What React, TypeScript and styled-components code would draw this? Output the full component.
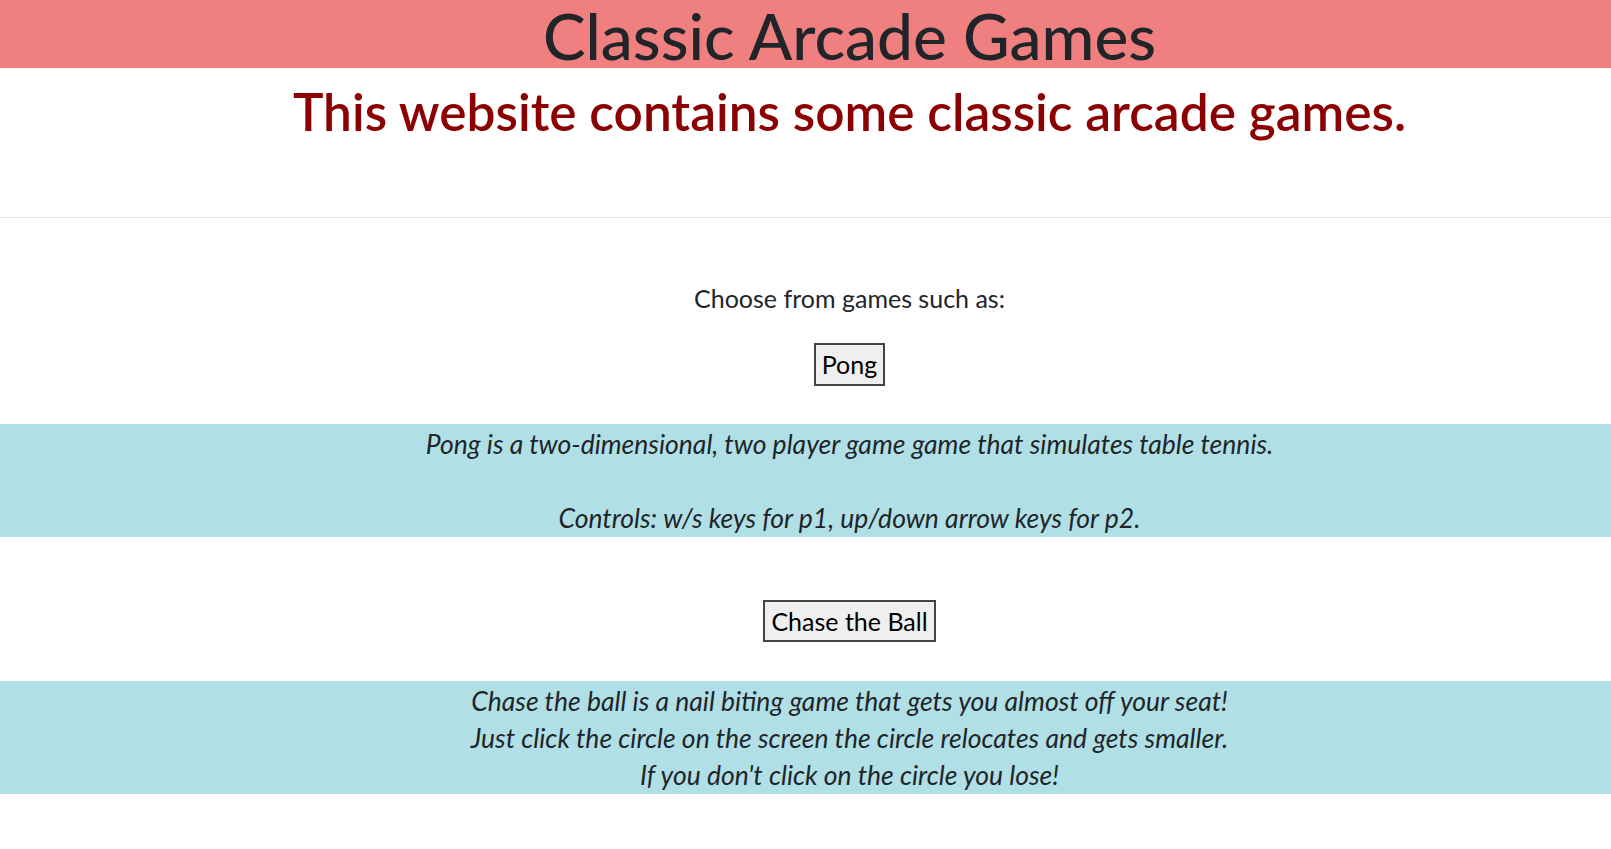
import React from "react";
import styled, { createGlobalStyle } from "styled-components";

const GlobalStyle = createGlobalStyle`
  html, body {
    margin: 0;
    padding: 0;
    background: #ffffff;
    overflow-x: hidden;
  }
  body {
    font-family: Lato, "Open Sans", "Liberation Sans", sans-serif;
    color: #212529;
  }
`;

const Page = styled.div`
  width: 1611px;
`;

const Header = styled.header`
  background: #f08080;
  height: 68px;
  padding-left: 88px;
  text-align: center;
`;

const Title = styled.h1`
  margin: 0;
  font-size: 64px;
  font-weight: 500;
  line-height: 64px;
  padding-top: 4px;
  color: #212529;
`;

const Intro = styled.section`
  box-sizing: border-box;
  padding: 12px 0 0 88px;
  text-align: center;
  height: 149px;
`;

const Subtitle = styled.h2`
  margin: 0;
  font-size: 51.4px;
  font-weight: 600;
  line-height: 62px;
  color: #8b0000;
`;

const Divider = styled.hr`
  margin: 0;
  border: 0;
  border-top: 1px solid rgba(0, 0, 0, 0.1);
`;

const Main = styled.main`
  padding-top: 62px;
  display: flex;
  flex-direction: column;
`;

const Lead = styled.p`
  margin: 0;
  padding-left: 88px;
  text-align: center;
  font-size: 25px;
  line-height: 37.5px;
`;

const ButtonRow = styled.div<{ $top: number }>`
  display: flex;
  justify-content: center;
  padding-left: 88px;
  margin-top: ${(p) => p.$top}px;
  margin-bottom: 38.5px;
`;

const GameButton = styled.button`
  font-family: inherit;
  font-size: 25px;
  line-height: 38.5px;
  color: #000;
  background: #efefef;
  border: 2px solid #444;
  border-radius: 0;
  padding: 0 6px;
  cursor: pointer;
`;

const Description = styled.p`
  margin: 0;
  padding: 2px 0 0 88px;
  background: #b0e0e6;
  text-align: center;
  font-size: 26.5px;
  font-style: italic;
  line-height: 37px;
  color: #212529;
`;

type Game = { name: string; top: number; lines: string[] };

const games: Game[] = [
  {
    name: "Pong",
    top: 25.5,
    lines: [
      "Pong is a two-dimensional, two player game game that simulates table tennis.",
      "",
      "Controls: w/s keys for p1, up/down arrow keys for p2.",
    ],
  },
  {
    name: "Chase the Ball",
    top: 62.5,
    lines: [
      "Chase the ball is a nail biting game that gets you almost off your seat!",
      "Just click the circle on the screen the circle relocates and gets smaller.",
      "If you don't click on the circle you lose!",
    ],
  },
];

export default function App() {
  return (
    <Page>
      <GlobalStyle />
      <Header>
        <Title>Classic Arcade Games</Title>
      </Header>
      <Intro>
        <Subtitle>This website contains some classic arcade games.</Subtitle>
      </Intro>
      <Divider />
      <Main>
        <Lead>Choose from games such as:</Lead>
        {games.map((g) => (
          <React.Fragment key={g.name}>
            <ButtonRow $top={g.top}>
              <GameButton type="button">{g.name}</GameButton>
            </ButtonRow>
            <Description>
              {g.lines.map((l, i) => (
                <React.Fragment key={i}>
                  {i > 0 && <br />}
                  {l}
                </React.Fragment>
              ))}
            </Description>
          </React.Fragment>
        ))}
      </Main>
    </Page>
  );
}
